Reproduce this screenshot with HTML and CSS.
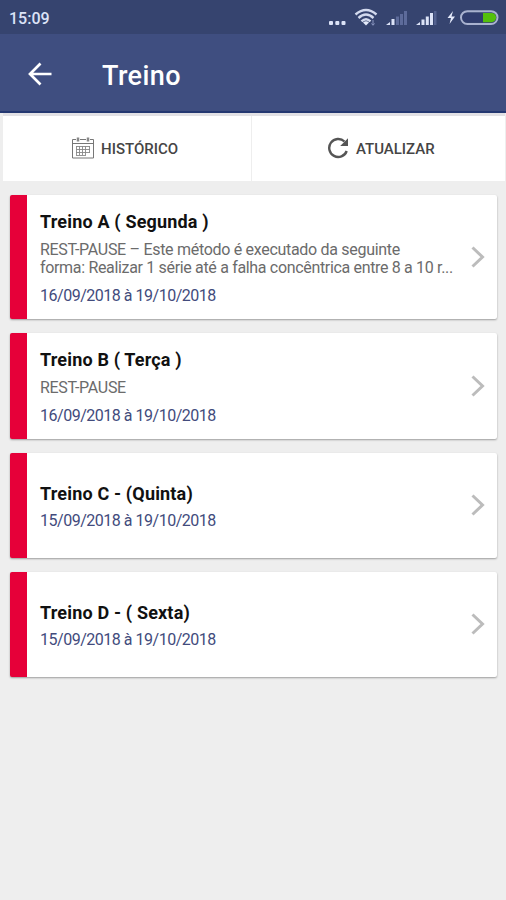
FILE: index.html
```html
<!DOCTYPE html>
<html lang="pt-BR">
<head>
<meta charset="utf-8">
<title>Treino</title>
<link rel="stylesheet" href="styles.css">
</head>
<body>
<div class="status">
  <span class="clock">15:09</span>
  <svg class="indicators" width="190" height="34" viewBox="0 0 190 34">
    <g fill="#dce3f7"><rect x="13" y="21" width="4" height="4" rx="1"/><rect x="19.3" y="21" width="4" height="4" rx="1"/><rect x="25.5" y="21" width="4" height="4" rx="1"/></g>
    <g fill="none" stroke="#d3daee" stroke-width="2.4"><path d="M39.500 14.500Q50 5.500 60.500 14.500"/><path d="M42.500 18Q50 11.200 57.500 18"/><path d="M45.500 21.300Q50 17 54.500 21.300"/></g>
    <path d="M47 22.500Q50 20 53 22.500L50 25.500Z" fill="#e4eafa"/>
    <path d="M57 20v5M55.500 23.500l1.500 1.800 1.500-1.800" stroke="#8995c0" fill="none"/>
    <g fill="#dce3f7"><path d="M70 25l4-3v3z"/><rect x="75.500" y="19" width="3" height="6"/></g>
    <g fill="#5d6b9a"><rect x="80" y="16.500" width="3" height="8.500"/><rect x="84" y="14" width="3" height="11"/><rect x="88" y="11" width="3" height="14"/></g>
    <g fill="#dce3f7"><path d="M100 25l4-3v3z"/><rect x="105.500" y="19.500" width="3" height="5.500"/><rect x="109.800" y="16.500" width="3" height="8.500"/><rect x="114" y="13" width="3" height="12"/></g>
    <rect x="118" y="11" width="2.500" height="14" fill="#53618f"/>
    <path d="M137 11l-5.500 7h3.500l-1.500 6 5.500-7.500h-3.500z" fill="#e4eafa"/>
    <rect x="145" y="11.200" width="36.500" height="12.800" rx="6.400" fill="none" stroke="#a9b2cf" stroke-width="2"/>
    <path d="M151 13h16v9.200h-16a4.600 4.600 0 0 1 0-9.200z" fill="#303d6e"/>
    <path d="M167 13h8.500a4.600 4.600 0 0 1 0 9.200H167z" fill="#54c00b"/>
  </svg>
</div>
<header class="appbar">
  <svg class="back" width="24" height="24" viewBox="0 0 24 24"><path d="M23.500 12H3M12.500 1.500L2 12L12.500 22.500" fill="none" stroke="#fff" stroke-width="2.700"/></svg>
  <h1>Treino</h1>
</header>
<nav class="tabs">
  <div class="tab">
    <svg width="22" height="22" viewBox="0 0 22 22" fill="none" stroke="#777">
      <path d="M4 2.500H.5v18.500h21V2.500H18M8 2.500h6M.5 6.500h21"/>
      <path d="M6 .5v4M16 .5v4" stroke-width="2.500" stroke="#888"/>
      <path d="M4 9.500h14M4 12.500h14M4 15.500h14M4 18.500h10M4.500 9v9M7.500 9v9M10.500 9v9M13.500 9v9M17.500 9v7" stroke="#888" stroke-width=".9"/>
    </svg>
    <span>HISTÓRICO</span>
  </div>
  <div class="tab">
    <svg width="22" height="22" viewBox="0 0 22 22"><path d="M17.500 4.500A9 9 0 1 0 19.700 14" fill="none" stroke="#555" stroke-width="2.400"/><path d="M21 1.200V9h-7.800z" fill="#555"/></svg>
    <span>ATUALIZAR</span>
  </div>
</nav>
<main class="list">
  <article class="card first">
    <div class="info"><h2>Treino A ( Segunda )</h2><p class="desc">REST-PAUSE – Este método é executado da seguinte<br><span class="line2">forma: Realizar 1 série até a falha concêntrica entre 8 a 10 r...</span></p><p class="date">16/09/2018 à 19/10/2018</p></div>
    <svg class="chevron" width="14" height="22" viewBox="0 0 14 22"><path d="M1.500 1.500L11.500 11L1.500 20.500"/></svg>
  </article>
  <article class="card second">
    <div class="info"><h2>Treino B ( Terça )</h2><p class="desc">REST-PAUSE</p><p class="date">16/09/2018 à 19/10/2018</p></div>
    <svg class="chevron" width="14" height="22" viewBox="0 0 14 22"><path d="M1.500 1.500L11.500 11L1.500 20.500"/></svg>
  </article>
  <article class="card short">
    <div class="info"><h2>Treino C - (Quinta)</h2><p class="date">15/09/2018 à 19/10/2018</p></div>
    <svg class="chevron" width="14" height="22" viewBox="0 0 14 22"><path d="M1.500 1.500L11.500 11L1.500 20.500"/></svg>
  </article>
  <article class="card short">
    <div class="info"><h2>Treino D - ( Sexta)</h2><p class="date">15/09/2018 à 19/10/2018</p></div>
    <svg class="chevron" width="14" height="22" viewBox="0 0 14 22"><path d="M1.500 1.500L11.500 11L1.500 20.500"/></svg>
  </article>
</main>
</body>
</html>
```
FILE: styles.css
```css
* { box-sizing: border-box; }
body { margin: 0; height: 900px; overflow: hidden; background: #eee; font-family: Roboto, sans-serif; }
h1, h2, p { margin: 0; }
.status { height: 34px; background: #36446f; display: flex; justify-content: space-between; align-items: center; padding-left: 9px; }
.clock { color: #dce3f7; font-size: 16px; font-weight: 500; line-height: 20px; padding-top: 3px; }
.appbar { height: 79px; background: #3f4e80; border-bottom: 2px solid #243871; display: flex; align-items: center; padding-left: 28px; }
.back { margin-top: 3px; }
h1 { margin-left: 50px; padding-top: 6px; color: #fff; font-size: 27px; font-weight: 500; line-height: 32px; letter-spacing: .4px; }
.tabs { display: grid; grid-template-columns: 248px 253px; gap: 1px; margin: 0 1px 0 3px; height: 68px; border-top: 3px solid #e2e1e5; }
.tab { background: #fff; display: flex; align-items: center; gap: 7px; height: 65px; }
.tab:first-child { padding-left: 69px; }
.tab:last-child { padding-left: 75px; }
.tab span { font-size: 15px; font-weight: 500; color: #454545; line-height: 20px; }
.tab svg { margin-top: -1px; }
.list { display: flex; flex-direction: column; gap: 14px; padding: 14px 9px 0 10px; }
.card { background: #fff; border-left: 17px solid #e60039; border-radius: 2px; box-shadow: 0 1px 2px rgba(0,0,0,.34); display: flex; align-items: center; justify-content: space-between; padding: 2px 12px 0 13px; }
.first { height: 124px; }
.second { height: 106px; }
.short { height: 105px; }
.info { display: flex; flex-direction: column; align-items: flex-start; white-space: nowrap; }
h2 { font-size: 18px; font-weight: 700; line-height: 24px; letter-spacing: .17px; color: #111; }
.desc { margin-top: 7px; margin-bottom: 4px; font-size: 16px; line-height: 18px; letter-spacing: -.3px; color: #6b6b6b; }
.line2 { letter-spacing: -.33px; }
.date { margin-top: 5px; font-size: 16px; line-height: 20px; letter-spacing: -.48px; color: #424b7c; }
.chevron { flex: none; margin-top: -2px; fill: none; stroke: #bcbcbc; stroke-width: 3; }
.short .chevron { margin-top: -4px; }
```
